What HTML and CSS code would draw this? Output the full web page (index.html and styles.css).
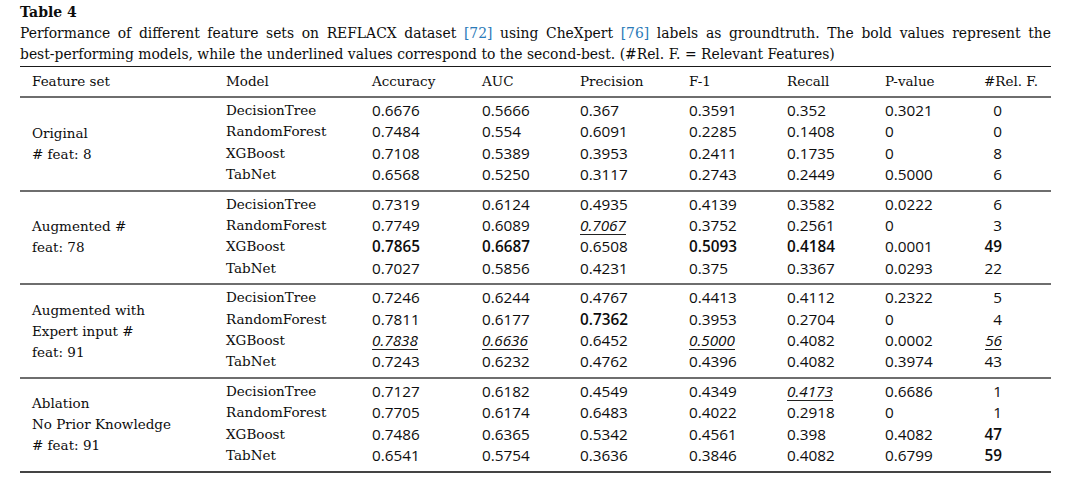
FILE: index.html
```html
<!DOCTYPE html>
<html>
<head>
<meta charset="utf-8">
<link rel="stylesheet" href="styles.css">
</head>
<body>
<div class="page">
  <div class="title">Table 4</div>
  <p class="caption">Performance of different feature sets on REFLACX dataset <span class="ref">[72]</span> using CheXpert <span class="ref">[76]</span> labels as groundtruth. The bold values represent the <span class="nw">best-performing</span> models, while the underlined values correspond to the second-best. (#Rel. F. = Relevant Features)</p>
  <table class="tbl">
    <colgroup>
      <col class="c1"><col class="c2"><col class="c3"><col class="c4"><col class="c5"><col class="c6"><col class="c7"><col class="c8"><col class="c9">
    </colgroup>
    <thead>
      <tr>
        <th class="fs">Feature set</th><th>Model</th><th>Accuracy</th><th>AUC</th><th>Precision</th><th>F-1</th><th>Recall</th><th>P-value</th><th>#Rel. F.</th>
      </tr>
    </thead>
    <tbody>
      <tr class="first">
        <td class="fs" rowspan="4">Original<br># feat: 8</td>
        <td class="m">DecisionTree</td><td>0.6676</td><td>0.5666</td><td>0.367</td><td>0.3591</td><td>0.352</td><td>0.3021</td><td class="r">0</td>
      </tr>
      <tr><td class="m">RandomForest</td><td>0.7484</td><td>0.554</td><td>0.6091</td><td>0.2285</td><td>0.1408</td><td>0</td><td class="r">0</td></tr>
      <tr><td class="m">XGBoost</td><td>0.7108</td><td>0.5389</td><td>0.3953</td><td>0.2411</td><td>0.1735</td><td>0</td><td class="r">8</td></tr>
      <tr class="last"><td class="m">TabNet</td><td>0.6568</td><td>0.5250</td><td>0.3117</td><td>0.2743</td><td>0.2449</td><td>0.5000</td><td class="r">6</td></tr>
    </tbody>
    <tbody>
      <tr class="first">
        <td class="fs" rowspan="4">Augmented #<br>feat: 78</td>
        <td class="m">DecisionTree</td><td>0.7319</td><td>0.6124</td><td>0.4935</td><td>0.4139</td><td>0.3582</td><td>0.0222</td><td class="r">6</td>
      </tr>
      <tr><td class="m">RandomForest</td><td>0.7749</td><td>0.6089</td><td><span class="second">0.7067</span></td><td>0.3752</td><td>0.2561</td><td>0</td><td class="r">3</td></tr>
      <tr><td class="m">XGBoost</td><td class="b">0.7865</td><td class="b">0.6687</td><td>0.6508</td><td class="b">0.5093</td><td class="b">0.4184</td><td>0.0001</td><td class="r b">49</td></tr>
      <tr class="last"><td class="m">TabNet</td><td>0.7027</td><td>0.5856</td><td>0.4231</td><td>0.375</td><td>0.3367</td><td>0.0293</td><td class="r">22</td></tr>
    </tbody>
    <tbody>
      <tr class="first">
        <td class="fs" rowspan="4">Augmented with<br>Expert input #<br>feat: 91</td>
        <td class="m">DecisionTree</td><td>0.7246</td><td>0.6244</td><td>0.4767</td><td>0.4413</td><td>0.4112</td><td>0.2322</td><td class="r">5</td>
      </tr>
      <tr><td class="m">RandomForest</td><td>0.7811</td><td>0.6177</td><td class="b">0.7362</td><td>0.3953</td><td>0.2704</td><td>0</td><td class="r">4</td></tr>
      <tr><td class="m">XGBoost</td><td><span class="second">0.7838</span></td><td><span class="second">0.6636</span></td><td>0.6452</td><td><span class="second">0.5000</span></td><td>0.4082</td><td>0.0002</td><td class="r"><span class="second">56</span></td></tr>
      <tr class="last"><td class="m">TabNet</td><td>0.7243</td><td>0.6232</td><td>0.4762</td><td>0.4396</td><td>0.4082</td><td>0.3974</td><td class="r">43</td></tr>
    </tbody>
    <tbody class="end">
      <tr class="first">
        <td class="fs" rowspan="4">Ablation<br>No Prior Knowledge<br># feat: 91</td>
        <td class="m">DecisionTree</td><td>0.7127</td><td>0.6182</td><td>0.4549</td><td>0.4349</td><td><span class="second">0.4173</span></td><td>0.6686</td><td class="r">1</td>
      </tr>
      <tr><td class="m">RandomForest</td><td>0.7705</td><td>0.6174</td><td>0.6483</td><td>0.4022</td><td>0.2918</td><td>0</td><td class="r">1</td></tr>
      <tr><td class="m">XGBoost</td><td>0.7486</td><td>0.6365</td><td>0.5342</td><td>0.4561</td><td>0.398</td><td>0.4082</td><td class="r b">47</td></tr>
      <tr class="last"><td class="m">TabNet</td><td>0.6541</td><td>0.5754</td><td>0.3636</td><td>0.3846</td><td>0.4082</td><td>0.6799</td><td class="r b">59</td></tr>
    </tbody>
  </table>
</div>
</body>
</html>
```

FILE: styles.css
```css
html, body {
  margin: 0;
  padding: 0;
  background: #ffffff;
}
.page {
  width: 1031px;
  padding: 3px 0 0 20px;
  color: #0d0d0d;
  font-family: "DejaVu Serif", serif;
}
.title {
  font-weight: bold;
  font-size: 14px;
  line-height: 19px;
}
.caption {
  margin: 1px 0 0 0;
  font-size: 13.9px;
  line-height: 21px;
  text-align: justify;
}
.nw {
  white-space: nowrap;
}
.ref {
  color: #2a7ab8;
}
.tbl {
  margin-top: 1px;
  width: 1031px;
  border-collapse: collapse;
  table-layout: fixed;
  border-top: 1px solid #1a1a1a;
}
.c1 { width: 206px; }
.c2 { width: 146px; }
.c3 { width: 110px; }
.c4 { width: 98px; }
.c5 { width: 109px; }
.c6 { width: 98px; }
.c7 { width: 98px; }
.c8 { width: 99px; }
.c9 { width: 67px; }
.tbl th {
  font-weight: normal;
  font-size: 13.5px;
  text-align: left;
  padding: 6px 0 6px 0;
  line-height: 17px;
  border-bottom: 2px solid #6e6e6e;
}
.tbl td {
  padding: 0;
  height: 21.4px;
  line-height: 21.4px;
  font-family: "Open Sans", sans-serif;
  font-size: 15.3px;
  white-space: nowrap;
  vertical-align: middle;
}
.tbl td.m {
  font-family: "DejaVu Serif", serif;
  font-size: 13.5px;
}
.tbl .fs {
  padding-left: 12px;
  font-family: "DejaVu Serif", serif;
  font-size: 13.5px;
}
.tbl td.fs {
  line-height: 21px;
}
.tbl td.r {
  text-align: right;
  padding-right: 49px;
}
.tbl tr.first td {
  padding-top: 2px;
}
.tbl tr.first td.fs {
  padding-top: 0;
}
.tbl tr.last td {
  padding-bottom: 4px;
}
.tbl tr.last td.fs {
  padding-bottom: 0;
}
.tbl tbody {
  border-bottom: 2px solid #6e6e6e;
}
.tbl tbody.end {
  border-bottom: 2px solid #444;
}
.b {
  font-weight: 600;
}
.second {
  display: inline-block;
  font-style: italic;
  line-height: 18px;
  border-bottom: 1px solid #222;
}
```
